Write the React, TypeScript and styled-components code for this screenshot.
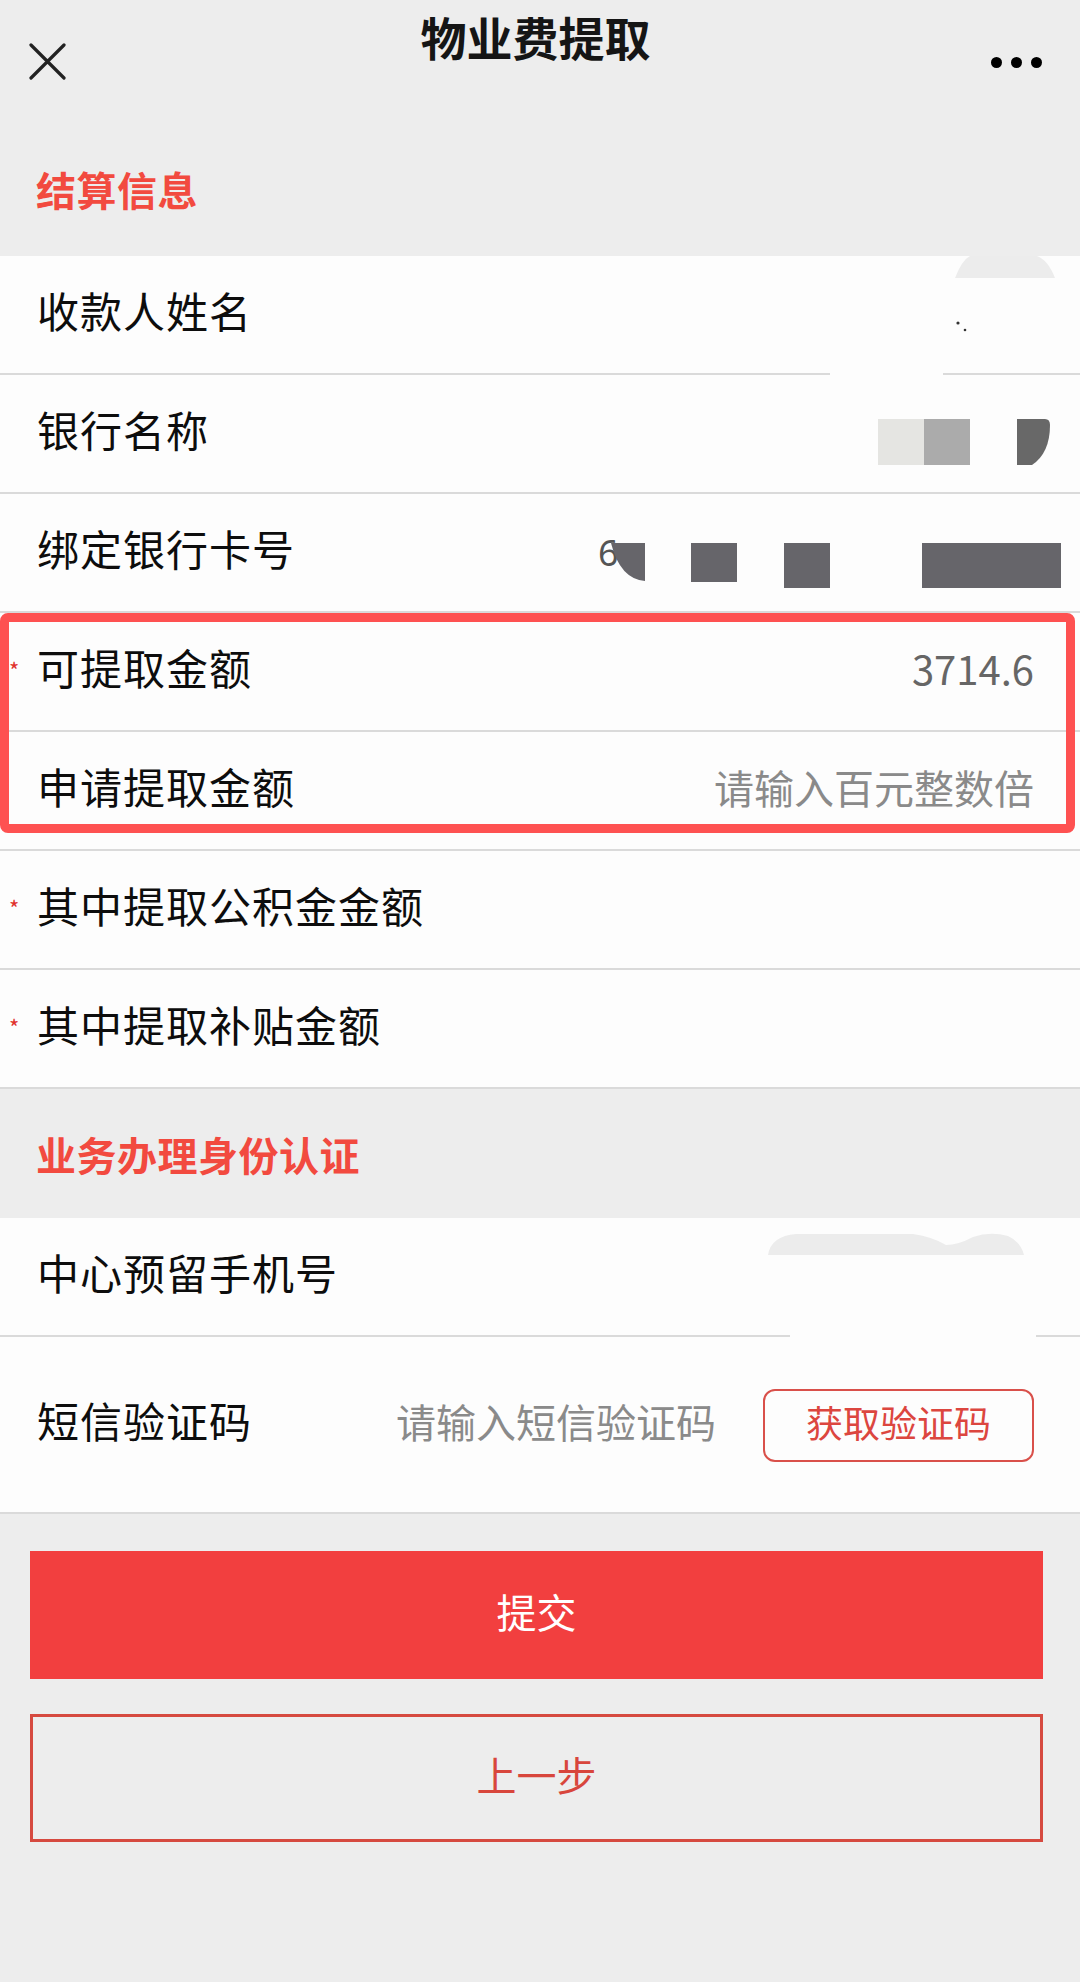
import React from 'react';
import styled, { createGlobalStyle } from 'styled-components';

const GlobalStyle = createGlobalStyle`
  html, body {
    margin: 0;
    padding: 0;
    background: #ededed;
  }
  body {
    font-family: "Noto Sans CJK SC", "Noto Sans", sans-serif;
    color: #111;
  }
`;

const Page = styled.div`
  width: 1080px;
  min-height: 1982px;
  background: #ededed;
`;

const NavBar = styled.header`
  height: 122px;
  display: flex;
  align-items: flex-start;
  justify-content: space-between;
  padding: 0 38px 0 29px;
  box-sizing: border-box;
`;

const NavIcon = styled.div<{ $top: number }>`
  margin-top: ${({ $top }) => $top}px;
  width: 60px;
  display: flex;
  justify-content: ${({ $top }) => ($top > 50 ? 'flex-end' : 'flex-start')};
`;

const NavTitle = styled.h1`
  margin: -4px 0 0;
  font-size: 46px;
  line-height: 80px;
  font-weight: 700;
  color: #151515;
`;

const Dots = styled.div`
  display: flex;
  gap: 9px;

  span {
    width: 11px;
    height: 11px;
    border-radius: 50%;
    background: #000;
  }
`;

const SectionTitle = styled.h2<{ $h: number }>`
  margin: 0;
  height: ${({ $h }) => $h}px;
  padding: 0 38px 0 36px;
  box-sizing: border-box;
  display: flex;
  align-items: center;
  font-size: 40px;
  font-weight: 700;
  letter-spacing: 0.5px;
  color: #f24a3f;
`;

const Group = styled.section`
  position: relative;
  background: #fdfdfd;
`;

const Row = styled.div<{ $h?: number; $gap?: [number, number] }>`
  position: relative;
  height: ${({ $h }) => $h ?? 119}px;
  display: flex;
  align-items: center;
  padding-right: 46px;
  box-sizing: border-box;

  &::after {
    content: '';
    position: absolute;
    left: 0;
    right: 0;
    bottom: 0;
    height: 2px;
    background: ${({ $gap }) =>
      $gap
        ? `linear-gradient(to right, #dadada 0 ${$gap[0]}px, transparent ${$gap[0]}px ${$gap[1]}px, #dadada ${$gap[1]}px)`
        : '#dadada'};
  }
`;

const Gutter = styled.span`
  width: 37px;
  flex: none;
  padding-left: 9px;
  box-sizing: border-box;
  align-self: center;
  margin-top: -8px;
  font-size: 22px;
  color: #e0312c;
`;

const Label = styled.span`
  margin-top: -12px;
  font-size: 42px;
  letter-spacing: 1px;
  color: #0d0d0d;
  white-space: nowrap;
`;

const Value = styled.span<{ $muted?: boolean }>`
  margin-left: auto;
  margin-top: -10px;
  font-size: 40px;
  color: ${({ $muted }) => ($muted ? '#8a8a8a' : '#666')};
  white-space: nowrap;
`;

const Art = styled.svg<{ $top?: number; $right?: number }>`
  margin-left: auto;
  flex: none;
  align-self: ${({ $top }) => ($top !== undefined ? 'flex-start' : 'center')};
  margin-top: ${({ $top }) => $top ?? 0}px;
  margin-right: ${({ $right }) => $right ?? 0}px;
`;

const CodeButton = styled.button`
  margin-left: 47px;
  width: 271px;
  height: 73px;
  flex: none;
  border: 2px solid #d9504a;
  border-radius: 12px;
  background: transparent;
  font-family: inherit;
  font-size: 37px;
  line-height: 1;
  color: #dc463f;
  padding: 0 0 6px;
`;

const Highlight = styled.div`
  position: absolute;
  left: 0;
  top: 357px;
  width: 1075px;
  height: 220px;
  border: 9px solid #fe5151;
  border-radius: 8px;
  box-sizing: border-box;
  pointer-events: none;
`;

const Actions = styled.div`
  padding: 37px 37px 0 30px;
  display: flex;
  flex-direction: column;
  gap: 35px;
`;

const ActionButton = styled.button<{ $primary?: boolean }>`
  height: 128px;
  width: 100%;
  border: ${({ $primary }) => ($primary ? 'none' : '3px solid #d64a40')};
  background: ${({ $primary }) => ($primary ? '#f23f3f' : 'transparent')};
  color: ${({ $primary }) => ($primary ? '#fff' : '#d8463c')};
  font-family: inherit;
  font-size: 40px;
  line-height: 1;
  padding: 0 0 8px;
`;

const Star = () => <Gutter>*</Gutter>;

export default function App() {
  return (
    <Page>
      <GlobalStyle />
      <NavBar>
        <NavIcon $top={43}>
          <svg width="37" height="37" viewBox="0 0 37 37">
            <path d="M2 2 L35 35 M35 2 L2 35" stroke="#222" strokeWidth="3.2" strokeLinecap="round" />
          </svg>
        </NavIcon>
        <NavTitle>物业费提取</NavTitle>
        <NavIcon $top={57}>
          <Dots>
            <span />
            <span />
            <span />
          </Dots>
        </NavIcon>
      </NavBar>

      <SectionTitle $h={134}>结算信息</SectionTitle>
      <Group>
        <Row $gap={[830, 943]}>
          <Gutter />
          <Label>收款人姓名</Label>
          <Art width="100" height="80" $top={0} $right={-21} viewBox="0 0 100 80">
            <path d="M0 22 Q7 4 15 0 L82 0 Q93 4 100 22 Z" fill="#ececec" />
            <circle cx="3" cy="67" r="1.6" fill="#333" />
            <circle cx="10" cy="74" r="1.3" fill="#333" />
          </Art>
        </Row>
        <Row>
          <Gutter />
          <Label>银行名称</Label>
          <Art width="172" height="46" $right={-16} viewBox="0 0 172 46" style={{ marginTop: 15 }}>
            <rect x="0" y="0" width="46" height="46" fill="#e5e5e2" />
            <rect x="46" y="0" width="46" height="46" fill="#ababab" />
            <path d="M139 0 L167 0 Q172 0 172 6 Q172 34 154 46 L139 46 Z" fill="#686868" />
          </Art>
        </Row>
        <Row>
          <Gutter />
          <Label>绑定银行卡号</Label>
          <Art width="465" height="72" $right={-29} viewBox="0 0 465 72" style={{ marginTop: 12 }}>
            <text x="0" y="42" fontSize="36" fill="#555" fontFamily="Noto Sans, sans-serif">6</text>
            <path d="M13 19 L47 19 L47 57 Q22 55 13 19 Z" fill="#66656a" />
            <rect x="93" y="19" width="46" height="39" fill="#66656a" />
            <rect x="186" y="19" width="46" height="45" fill="#66656a" />
            <rect x="324" y="19" width="139" height="45" fill="#66656a" />
          </Art>
        </Row>
        <Row>
          <Star />
          <Label>可提取金额</Label>
          <Value>3714.6</Value>
        </Row>
        <Row>
          <Gutter />
          <Label>申请提取金额</Label>
          <Value $muted>请输入百元整数倍</Value>
        </Row>
        <Row>
          <Star />
          <Label>其中提取公积金金额</Label>
        </Row>
        <Row>
          <Star />
          <Label>其中提取补贴金额</Label>
        </Row>
        <Highlight />
      </Group>

      <SectionTitle $h={129}>业务办理身份认证</SectionTitle>
      <Group>
        <Row $gap={[790, 1036]}>
          <Gutter />
          <Label>中心预留手机号</Label>
          <Art width="256" height="22" $top={15} $right={10} viewBox="0 0 256 22">
            <path
              d="M0 22 Q3 3 28 1 L145 1 Q165 4 178 12 Q190 12 205 4 Q222 -2 240 3 Q253 9 256 22 Z"
              fill="#ececec"
            />
          </Art>
        </Row>
        <Row $h={177}>
          <Gutter />
          <Label>短信验证码</Label>
          <Value $muted>请输入短信验证码</Value>
          <CodeButton>获取验证码</CodeButton>
        </Row>
      </Group>

      <Actions>
        <ActionButton $primary>提交</ActionButton>
        <ActionButton>上一步</ActionButton>
      </Actions>
    </Page>
  );
}
